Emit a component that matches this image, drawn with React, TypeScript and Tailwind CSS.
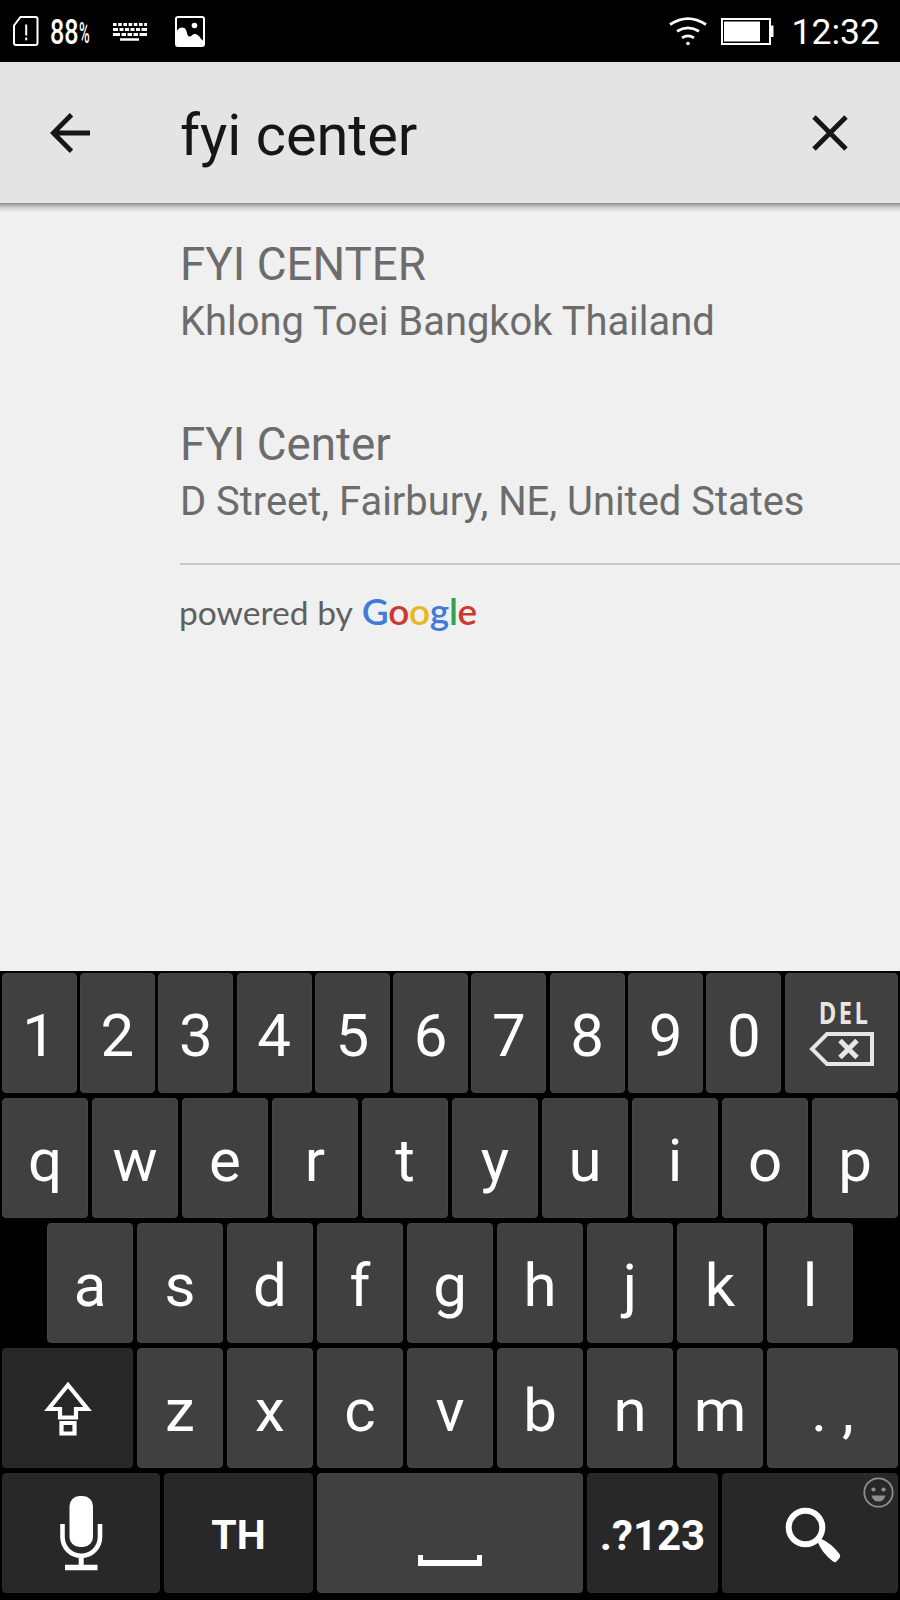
import type { ReactNode } from "react";

interface KeyProps {
  width:     string;
  children?: ReactNode;
  dark?:     boolean;
}

const DIGITS = ["1", "2", "3", "4", "5", "6", "7", "8", "9", "0"];
const ROW_TOP = ["q", "w", "e", "r", "t", "y", "u", "i", "o", "p"];
const ROW_HOME = ["a", "s", "d", "f", "g", "h", "j", "k", "l"];
const ROW_BOTTOM = ["z", "x", "c", "v", "b", "n", "m"];

const PLACES = [
  { name: "FYI CENTER", address: "Khlong Toei Bangkok Thailand" },
  { name: "FYI Center", address: "D Street, Fairbury, NE, United States" },
];

function Key({ width, children, dark = false }: KeyProps) {
  return (
    <div className={`${width} h-[120px] shrink-0 px-[1.7px]`}>
      <button
        className={`relative flex h-full w-full items-center justify-center rounded-[4px] border text-[60px] leading-none text-white ${
          dark ? "border-[#2b2b2b] bg-[#282828]" : "border-[#454545] bg-[#404040]"
        }`}
      >
        {children}
      </button>
    </div>
  );
}

function Letter({ children }: { children: string }) {
  return <span className="pt-[5px]">{children}</span>;
}

function StatusBar() {
  return (
    <div className="flex h-[62px] items-center bg-black pl-[13px] pr-[20px] text-white">
      {/* SIM warning */}
      <svg width="26" height="30" viewBox="0 0 26 30" fill="none" stroke="white" strokeWidth="2">
        <path d="M7.500 1H22.500a2 2 0 0 1 2 2V27a2 2 0 0 1-2 2H3a2 2 0 0 1-2-2V9.500Z" />
        <path d="M13.200 8.500v11M13.200 21.500v2.800" />
      </svg>

      <span className="ml-[11px] flex w-[40px] items-center">
        <span className="w-[29px] origin-left scale-x-[0.72] pt-[3px] text-[35px] leading-none font-medium">88</span>
        <span className="w-[11px] origin-left scale-x-[0.5] pt-[4px] text-[29px] leading-none font-medium">%</span>
      </span>

      {/* Keyboard */}
      <svg className="ml-[23px] mt-[2px]" width="34" height="18" viewBox="0 0 34 18" stroke="white" fill="none">
        <path d="M0 1.500H34" strokeWidth="3" strokeDasharray="3.600 1.600" />
        <path d="M0 6.500H34" strokeWidth="3" strokeDasharray="5 1.500 4 1.500 4 1.500 4 1.500 4 1.500 6" />
        <path d="M0 11.500H34" strokeWidth="3" strokeDasharray="7 1.500 4.500 1.500 4.500 1.500 4.500 1.500 8" />
        <path d="M7 16.500H26" strokeWidth="2.500" />
      </svg>

      {/* Picture */}
      <svg className="ml-[28px] mt-[1px]" width="30" height="31" viewBox="0 0 30 31">
        <rect x="1" y="1" width="28" height="29" rx="2" fill="none" stroke="white" strokeWidth="2" />
        <circle cx="19.500" cy="9.500" r="2.800" fill="white" />
        <path d="M1 17C3 11 9 10 11 14c1.500 3 1 6 3.500 6.500C17 20.500 17 18 20 18c4 .5 5 4.500 9 7.500v4.500H1Z" fill="white" />
      </svg>

      {/* Wifi */}
      <svg className="ml-auto" width="38" height="29" viewBox="0 0 38 29" fill="none" stroke="white" strokeWidth="2.800">
        <path d="M1 7.500Q19-4.200 37 7.500" />
        <path d="M8 14.200Q19 7.600 30 14.200" />
        <path d="M13 20.800Q19 16.800 25 20.800" />
        <circle cx="19" cy="26.500" r="1.800" fill="white" stroke="none" />
      </svg>

      {/* Battery */}
      <svg className="ml-[14px]" width="53" height="27" viewBox="0 0 53 27">
        <rect x="1" y="1" width="48" height="25" fill="none" stroke="white" strokeWidth="2" />
        <rect x="3" y="3.500" width="36" height="20" fill="white" />
        <rect x="50" y="7.500" width="2.500" height="11.500" fill="white" />
      </svg>

      <span className="ml-[18px] pt-[4px] text-[35.5px] leading-none">12:32</span>
    </div>
  );
}

function SearchBar() {
  return (
    <div className="flex h-[141px] items-center bg-[#e4e4e4] pl-[50px] pr-[52px]">
      <svg width="40" height="40" viewBox="0 0 40 40" fill="none" stroke="#161616" strokeWidth="4.800">
        <path d="M40 20H3M21.500 1.800L3.300 20l18.200 18.200" />
      </svg>
      <span className="ml-[90px] pt-[6px] text-[57.7px] leading-none text-[#161616]">fyi center</span>
      <svg className="ml-auto" width="36" height="36" viewBox="0 0 36 36" stroke="#161616" strokeWidth="4.800">
        <path d="M2 2l32 32M34 2L2 34" />
      </svg>
    </div>
  );
}

function PlaceList() {
  return (
    <div className="h-[759px] bg-[#f0f0f0] pl-[180px] text-[#6c6c6c]">
      <div className="h-[353px] border-b-2 border-[#c8c8c8]">
        {PLACES.map((place) => (
          <div key={place.name} className="h-[180px] pt-[26px]">
            <div className="text-[45.8px] leading-[54px]">{place.name}</div>
            <div className="text-[39.9px] leading-[59px]">{place.address}</div>
          </div>
        ))}
      </div>
      <div className="flex items-baseline pt-[26px] font-['Lato'] text-[33.6px] leading-[40px] text-[#5f5f5f]">
        <span className="-ml-px">powered by</span>
        <span className="ml-[9px] text-[37px] font-semibold tracking-[-0.3px]">
          <span className="text-[#3f7bdb]">G</span>
          <span className="text-[#cb3a2e]">o</span>
          <span className="text-[#eab61c]">o</span>
          <span className="text-[#3f7bdb]">g</span>
          <span className="text-[#35a052]">l</span>
          <span className="text-[#cb3a2e]">e</span>
        </span>
      </div>
    </div>
  );
}

function Keyboard() {
  return (
    <div className="flex h-[629px] flex-col gap-[5px] bg-black pt-[2px]">
      <div className="flex">
        {DIGITS.map((d) => (
          <Key key={d} width="w-[78.3px]">
            <Letter>{d}</Letter>
          </Key>
        ))}
        <Key width="w-[117px]">
          <span className="flex flex-col items-center pl-[1px]">
            <span className="pl-[5px] font-['Open_Sans'] text-[30px] leading-[28px] font-bold tracking-[3px] text-[#e6e6e6]">
              <span className="inline-block scale-x-[0.79]">DEL</span>
            </span>
            <svg className="mt-[4px]" width="66" height="36" viewBox="0 0 66 36" fill="none" stroke="#e6e6e6" strokeWidth="4">
              <path d="M18 3H63V33H18L3 18Z" />
              <path d="M31 9.500l17 17M48 9.500l-17 17" strokeWidth="5" />
            </svg>
          </span>
        </Key>
      </div>

      <div className="flex">
        {ROW_TOP.map((c) => (
          <Key key={c} width="w-[90px]">
            <Letter>{c}</Letter>
          </Key>
        ))}
      </div>

      <div className="flex justify-center">
        {ROW_HOME.map((c) => (
          <Key key={c} width="w-[90px]">
            <Letter>{c}</Letter>
          </Key>
        ))}
      </div>

      <div className="flex">
        <Key width="w-[135px]" dark>
          <svg className="mt-[1px] ml-[1px]" width="48" height="56" viewBox="0 0 48 56" fill="none" stroke="white" strokeWidth="4.200">
            <path d="M24 4L43.500 28H32V36.500H16V28H4.500Z" />
            <path d="M17.500 42H30.500V52.500H17.500Z" />
          </svg>
        </Key>
        {ROW_BOTTOM.map((c) => (
          <Key key={c} width="w-[90px]">
            <Letter>{c}</Letter>
          </Key>
        ))}
        <Key width="w-[135px]">
          <Letter>. ,</Letter>
        </Key>
      </div>

      <div className="flex">
        <Key width="w-[162px]" dark>
          <svg width="44" height="76" viewBox="0 0 44 76" fill="none" stroke="white">
            <rect x="10.500" y="1" width="23.500" height="51" rx="10" fill="white" stroke="none" />
            <path d="M3.500 29V42a18.700 18.700 0 0 0 37.500 0V29" strokeWidth="4.600" />
            <path d="M22.200 60V72" strokeWidth="5" />
            <path d="M6 72.500H38.500" strokeWidth="5.500" />
          </svg>
        </Key>
        <Key width="w-[153px]" dark>
          <span className="pt-[5px] text-[41px] font-bold">TH</span>
        </Key>
        <Key width="w-[270px]">
          <svg className="mt-[55px]" width="66" height="12" viewBox="0 0 66 12" fill="white">
            <path d="M1 0H6V5H60V0H65V11H1Z" />
          </svg>
        </Key>
        <Key width="w-[135px]" dark>
          <span className="pt-[5px] text-[42px] font-bold">.?123</span>
        </Key>
        <Key width="w-[180px]" dark>
          <svg className="mt-[3px] ml-[5px]" width="56" height="56" viewBox="0 0 56 56">
            <circle cx="20.500" cy="20.500" r="16.800" fill="none" stroke="white" strokeWidth="6" />
            <path d="M35.500 31.500Q46 36 54.500 47Q56 49 54.500 51L51.500 54.500Q49.500 56 47.500 54Q37 46 32.500 34.500Z" fill="white" />
          </svg>
          {/* Emoji hint in the corner */}
          <svg className="absolute top-[3px] right-[3px]" width="31" height="31" viewBox="0 0 31 31" fill="#8e8e8e">
            <circle cx="15.500" cy="15.500" r="14.200" fill="none" stroke="#8e8e8e" strokeWidth="1.800" />
            <circle cx="10.500" cy="12.500" r="2.100" />
            <circle cx="20.500" cy="12.500" r="2.100" />
            <path d="M8.500 18.500H22.500Q21 24.500 15.500 24.500T8.500 18.500Z" />
          </svg>
        </Key>
      </div>
    </div>
  );
}

export default function App() {
  return (
    <div className="flex h-[1600px] w-[900px] flex-col overflow-hidden bg-black font-[Roboto,sans-serif]">
      <StatusBar />
      <SearchBar />
      <div className="h-[9px] bg-linear-to-b from-[#8f8f8f] via-[#cfcfcf] to-[#f0f0f0]" />
      <PlaceList />
      <Keyboard />
    </div>
  );
}
